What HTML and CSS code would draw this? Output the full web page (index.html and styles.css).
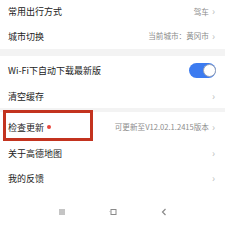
FILE: index.html
```html
<!DOCTYPE html>
<html lang="zh">
<head>
<meta charset="utf-8">
<link rel="stylesheet" href="styles.css">
</head>
<body>
<div class="screen">
  <div class="row r1"><span class="label">常用出行方式</span><span class="right"><span class="val">驾车</span><span class="chev">›</span></span></div>
  <div class="row r2"><span class="label">城市切换</span><span class="right"><span class="val">当前城市：黄冈市</span><span class="chev">›</span></span></div>
  <div class="band b1"></div>
  <div class="row r3"><span class="label">Wi-Fi下自动下载最新版</span><span class="toggle"><span class="knob"></span></span></div>
  <div class="row r4"><span class="label">清空缓存</span><span class="right"><span class="chev">›</span></span></div>
  <div class="band b2"></div>
  <div class="row r5"><span class="label">检查更新<span class="dot"></span></span><span class="right"><span class="val">可更新至V12.02.1.2415版本</span><span class="chev">›</span></span><span class="mark"></span></div>
  <div class="row r6"><span class="label">关于高德地图</span><span class="right"><span class="chev">›</span></span></div>
  <div class="row r7"><span class="label">我的反馈</span><span class="right"><span class="chev">›</span></span></div>
  <div class="nav">
    <svg class="ico" width="10" height="10" viewBox="0 0 10 10"><path d="M2 3h6M2 5h6M2 7h6" stroke="#8a8a8a" stroke-width="1" fill="none"/></svg>
    <svg class="ico" width="10" height="10" viewBox="0 0 10 10"><rect x="3" y="2.5" width="5" height="5" stroke="#8a8a8a" stroke-width="1" fill="none"/><path d="M1.5 4.5h1.5" stroke="#bbb" stroke-width="1"/></svg>
    <svg class="ico" width="10" height="10" viewBox="0 0 10 10"><path d="M6.5 2L3.5 5l3 3" stroke="#8a8a8a" stroke-width="1.2" fill="none"/></svg>
  </div>
</div>
</body>
</html>
```
FILE: styles.css
```css
html, body {
  margin: 0;
  padding: 0;
  background: #fff;
}
.screen {
  width: 225px;
  height: 225px;
  overflow: hidden;
  position: relative;
  font-family: "Noto Sans CJK SC", "Noto Sans", sans-serif;
  color: #222;
}
.row {
  display: flex;
  align-items: center;
  justify-content: space-between;
  padding: 0 10px 0 8px;
  position: relative;
  background: #fff;
}
.label {
  font-size: 9px;
  line-height: 1;
  display: flex;
  align-items: center;
}
.right {
  display: flex;
  align-items: center;
  gap: 3px;
  color: #8c8c8c;
  font-size: 7.6px;
  line-height: 1;
}
.chev {
  font-size: 10px;
  color: #bdbdbd;
  line-height: 1;
  margin-top: -1px;
}
.r1 { height: 23px; }
.r2 { height: 26px; }
.r3 { height: 28px; }
.r4 { height: 24px; }
.r5 { height: 30px; }
.r6 { height: 23px; }
.r7 { height: 26px; }
.band { background: #f3f3f3; }
.b1 { height: 7px; }
.b2 { height: 4px; }
.dot {
  width: 4px;
  height: 4px;
  border-radius: 50%;
  background: #e8453c;
  margin-left: 3px;
}
.toggle {
  width: 27px;
  height: 15px;
  border-radius: 8px;
  background: #3c7bf0;
  display: flex;
  justify-content: flex-end;
  align-items: center;
  margin-right: -1px;
}
.knob {
  width: 13px;
  height: 13px;
  border-radius: 50%;
  background: #fff;
  border: 1px solid #9aa3b5;
  box-sizing: border-box;
}
.mark {
  position: absolute;
  left: 3px;
  top: -2px;
  width: 90px;
  height: 31px;
  border: 3px solid #c3331f;
  box-sizing: border-box;
}
.nav {
  height: 34px;
  display: flex;
  justify-content: center;
  align-items: center;
  gap: 41px;
  padding-top: 8px;
  box-sizing: border-box;
  height: 34px;
}
.ico { display: block; }
```
